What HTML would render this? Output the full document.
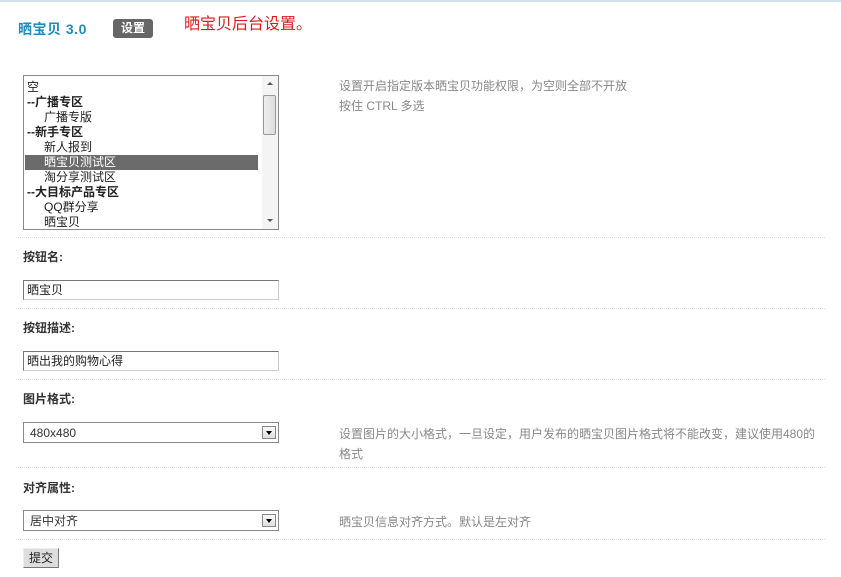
<!DOCTYPE html>
<html><head><meta charset="utf-8"><style>
body{margin:0;width:841px;height:577px;background:#fff;position:relative;overflow:hidden;font-family:"Liberation Sans","Noto Sans CJK SC",sans-serif;font-size:12px;color:#222}
.a{position:absolute;white-space:nowrap}
.sep{position:absolute;left:16px;width:809px;border-top:1px dotted #ddd;height:0}
.lbl{position:absolute;left:23px;font-weight:bold;color:#333;font-size:12px}
.inp{position:absolute;left:23px;border:1px solid #777;border-right-color:#ccc;border-bottom-color:#ccc;background:#fff;font-size:12px;line-height:19px;padding-left:3px;box-sizing:border-box;width:256px;height:20px}
.sel{position:absolute;left:23px;width:256px;height:21px;border:1px solid #888;box-sizing:border-box;background:#fff;font-size:12px;line-height:20px;padding-left:6px;color:#333}
.sel i{position:absolute;right:2px;top:3px;width:14px;height:13px;border:1px solid #888;box-sizing:border-box;background:linear-gradient(#fafafa,#ddd)}
.sel i:after{content:"";position:absolute;left:3px;top:4px;border-left:3px solid transparent;border-right:3px solid transparent;border-top:4px solid #000}
.gray{position:absolute;left:339px;color:#888;font-size:12px}
.lb div{height:15px;line-height:15px;font-size:12px;padding-left:2px}
</style></head><body>
<div class="a" style="left:0;top:0;width:841px;height:2px;background:#cfe0ea"></div>
<div class="a" style="left:18px;top:19px;font-weight:bold;font-size:14px;color:#1e8bb8;letter-spacing:0.5px">晒宝贝 3.0</div>
<div class="a" style="left:113px;top:19px;width:40px;height:19px;background:#666;border-radius:3px;color:#fff;font-weight:bold;text-align:center;line-height:19px;font-size:12px">设置</div>
<div class="a" style="left:184px;top:10px;font-size:16px;color:#d42020">晒宝贝后台设置。</div>
<div class="a lb" style="left:23px;top:75px;width:256px;height:155px;border:1px solid #888;box-sizing:border-box;background:#fff;overflow:hidden;padding-top:4px;padding-left:1px">
<div>空</div>
<div style="font-weight:bold">--广播专区</div>
<div style="padding-left:19px">广播专版</div>
<div style="font-weight:bold">--新手专区</div>
<div style="padding-left:19px">新人报到</div>
<div style="padding-left:19px;background:#6b6b6b;color:#fff;width:214px">晒宝贝测试区</div>
<div style="padding-left:19px">淘分享测试区</div>
<div style="font-weight:bold">--大目标产品专区</div>
<div style="padding-left:19px">QQ群分享</div>
<div style="padding-left:19px">晒宝贝</div>
<div class="a" style="left:238px;top:0;width:16px;height:153px;background:#f4f4f4;padding:0"></div>
<div class="a" style="left:239px;top:19px;width:13px;height:40px;border:1px solid #999;border-radius:2px;background:linear-gradient(90deg,#eee,#ddd);padding:0;box-sizing:border-box"></div>
<div class="a" style="left:243px;top:6px;border-left:3px solid transparent;border-right:3px solid transparent;border-bottom:3px solid #555;height:0;padding:0"></div>
<div class="a" style="left:243px;top:143px;border-left:3px solid transparent;border-right:3px solid transparent;border-top:3px solid #555;height:0;padding:0"></div>
</div>
<div class="gray" style="top:77px">设置开启指定版本晒宝贝功能权限，为空则全部不开放</div>
<div class="gray" style="top:97px">按住 CTRL 多选</div>
<div class="sep" style="top:237px"></div>
<div class="lbl" style="top:248px">按钮名:</div>
<div class="inp" style="top:280px">晒宝贝</div>
<div class="sep" style="top:308px"></div>
<div class="lbl" style="top:319px">按钮描述:</div>
<div class="inp" style="top:351px">晒出我的购物心得</div>
<div class="sep" style="top:379px"></div>
<div class="lbl" style="top:390px">图片格式:</div>
<div class="sel" style="top:422px">480x480<i></i></div>
<div class="gray" style="top:425px">设置图片的大小格式，一旦设定，用户发布的晒宝贝图片格式将不能改变，建议使用480的</div>
<div class="gray" style="top:445px">格式</div>
<div class="sep" style="top:467px"></div>
<div class="lbl" style="top:479px">对齐属性:</div>
<div class="sel" style="top:510px">居中对齐<i></i></div>
<div class="gray" style="top:513px">晒宝贝信息对齐方式。默认是左对齐</div>
<div class="sep" style="top:539px"></div>
<div class="a" style="left:23px;top:548px;width:36px;height:20px;border:1px solid #777;border-top-color:#eee;border-left-color:#eee;box-sizing:border-box;background:#ddd;text-align:center;line-height:18px;font-size:12px">提交</div>
</body></html>
